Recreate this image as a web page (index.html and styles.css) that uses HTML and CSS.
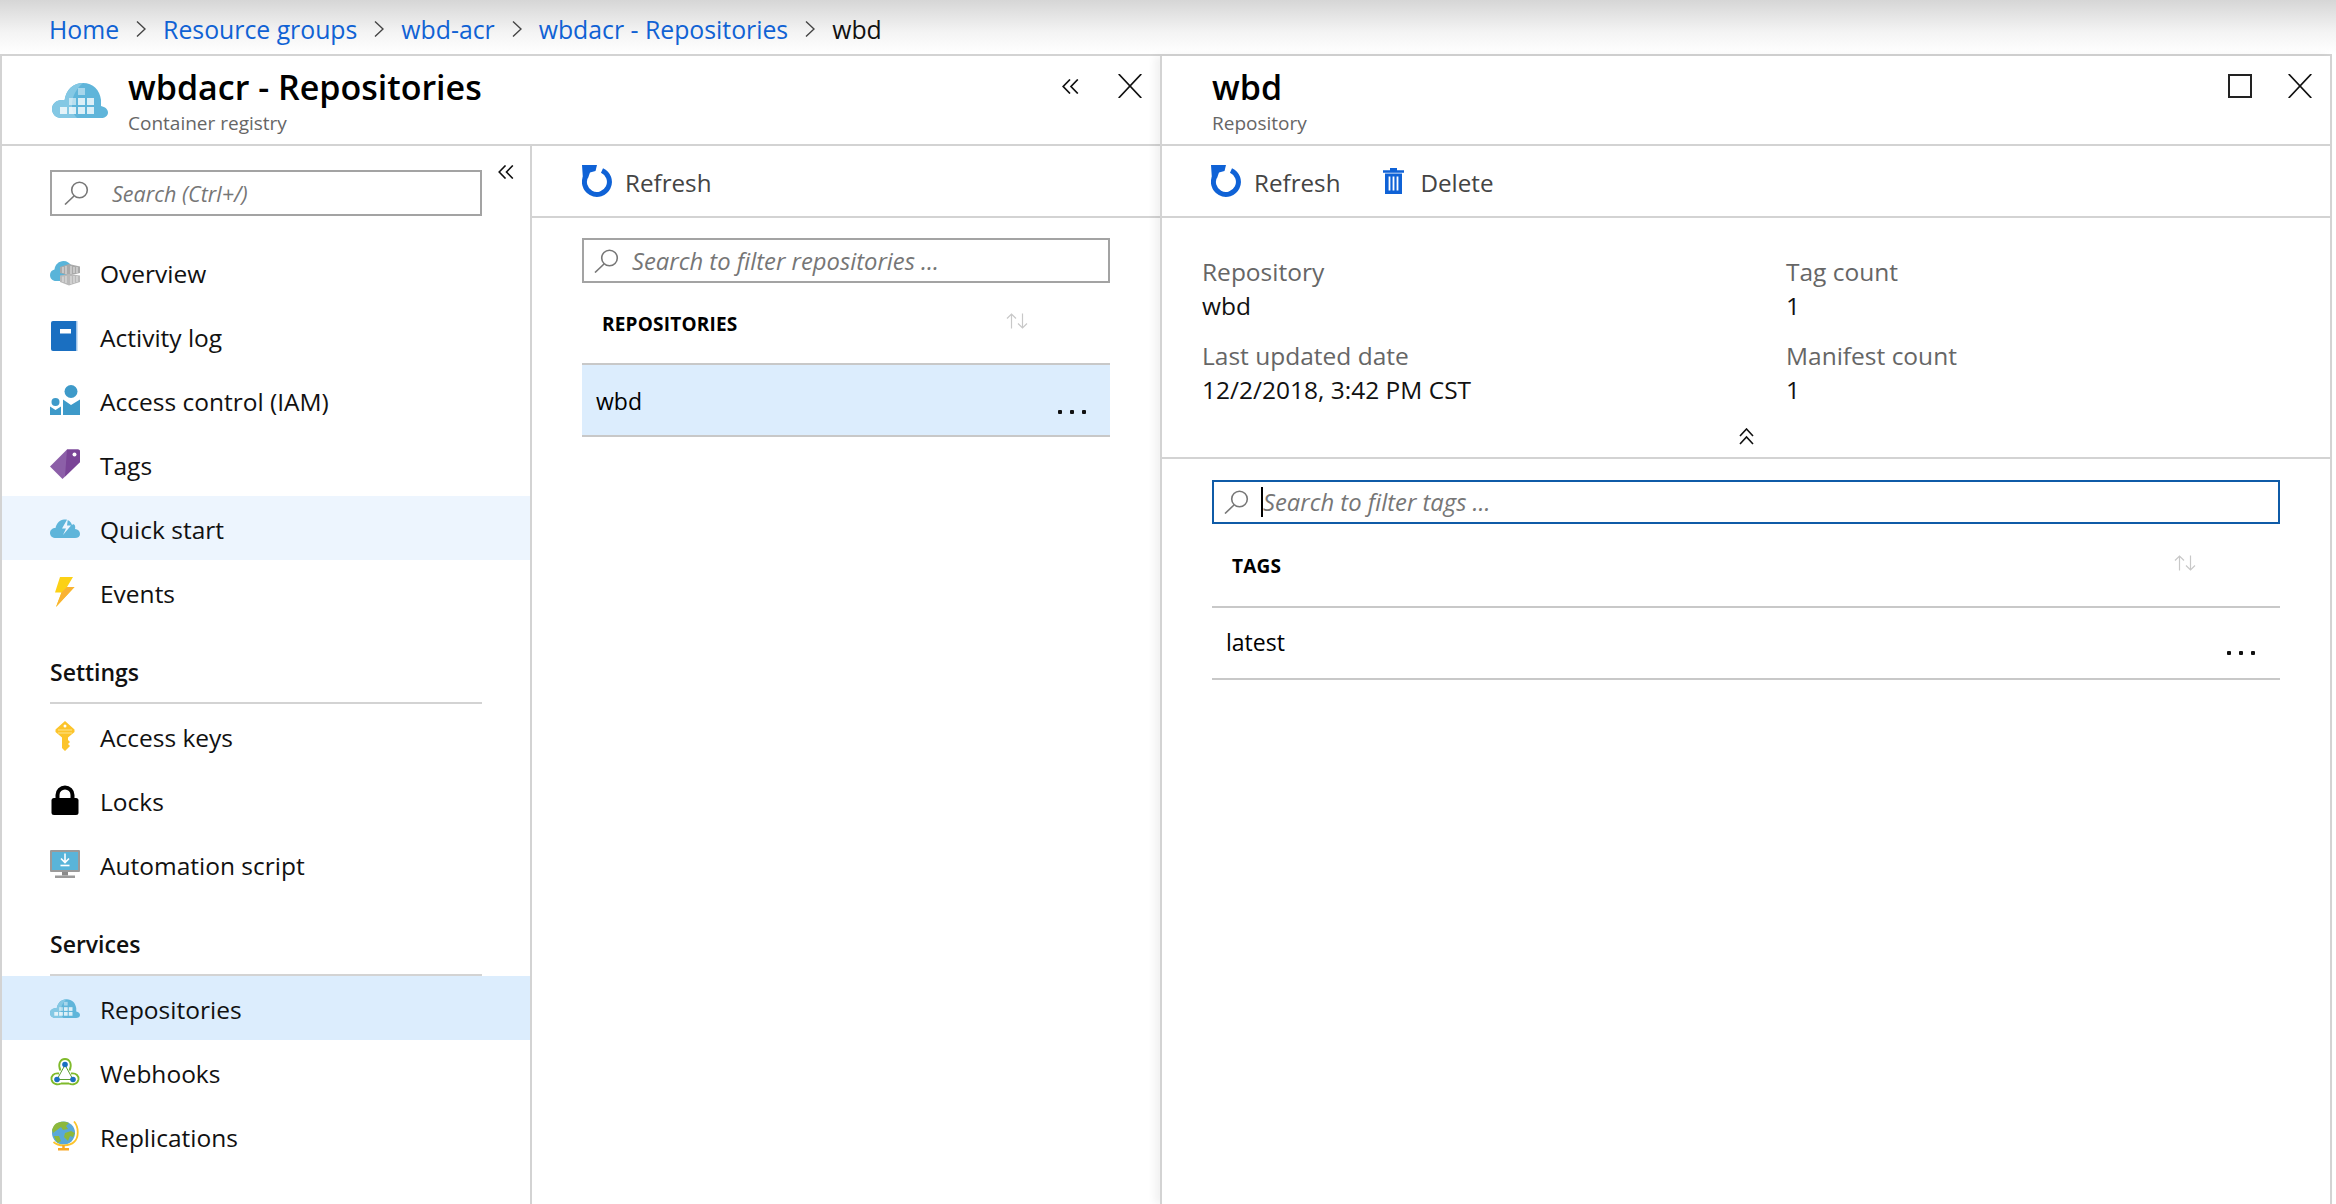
FILE: index.html
```html
<!DOCTYPE html>
<html lang="en">
<head>
    <meta charset="UTF-8">
    <meta name="viewport" content="width=device-width, initial-scale=1.0">
    <title>wbd - Repository</title>
    <link rel="stylesheet" href="styles.css">
</head>
<body>

    <!-- Shared icons -->
    <svg class="defs" width="0" height="0">
        <symbol id="i-search" viewBox="0 0 25 24">
            <circle cx="15.5" cy="9" r="7.8" fill="none" stroke="#777" stroke-width="1.6"/>
            <path d="M10 15 1 23.5" fill="none" stroke="#777" stroke-width="1.6"/>
        </symbol>
        <symbol id="i-close" viewBox="0 0 24 24">
            <path d="M.7 0 23.3 24M23.3 0 .7 24" fill="none" stroke="#111" stroke-width="1.7"/>
        </symbol>
        <symbol id="i-collapse" viewBox="0 0 17 15">
            <path d="M8 .5 1.2 7.5 8 14.5M15.8 .5 9 7.5 15.8 14.5" fill="none" stroke="#111" stroke-width="1.7"/>
        </symbol>
        <symbol id="i-refresh" viewBox="0 0 30 32">
            <path d="M20 5.500A12.500 12.500 0 1 1 4.200 10.500" fill="none" stroke="#0f62d6" stroke-width="5"/>
            <path d="M0 0H15L13.500 6 8 7.500 6 13 1 15Z" fill="#0f62d6"/>
        </symbol>
        <symbol id="i-sort" viewBox="0 0 22 16">
            <path d="M5.500 15.500V1M1 5.500 5.500 1 10 5.500M16.500 .5V15M12 10.500 16.500 15 21 10.500" fill="none" stroke="#c8c8c8" stroke-width="1.200"/>
        </symbol>
        <symbol id="i-registry" viewBox="0 0 56 35">
            <path d="M9 35C4 35 0 31 0 26 0 21 4 17 10 17L12.500 17.400C14 7 21 0 31 0 41 0 48 7 49 17V23C53 24 56 26 56 29.500 56 33 53 35 49 35Z" fill="#5fb5da"/>
            <path d="M9 35C4 35 0 31 0 26 0 21 4 17 10 17L12.500 17.400C14 7 21 0 31 0 24 6 20 14 20 22 20 28 22 32 25 35Z" fill="#84c8e4"/>
            <g fill="#fff" fill-opacity=".78">
                <rect x="8" y="24" width="7" height="7"/>
                <rect x="17" y="24" width="7" height="7"/>
                <rect x="26" y="24" width="7" height="7"/>
                <rect x="35" y="24" width="7" height="7"/>
                <rect x="17" y="15" width="7" height="7" fill-opacity=".55"/>
                <rect x="26" y="15" width="7" height="7"/>
                <rect x="35" y="15" width="7" height="7"/>
                <rect x="26" y="5" width="7" height="7" fill-opacity=".45"/>
            </g>
        </symbol>
    </svg>

    <!-- Breadcrumb -->
    <nav class="breadcrumb">
        <a>Home</a>
        <svg class="crumb-sep" viewBox="0 0 10 16"><path d="M1 .5 9 8 1 15.500" fill="none" stroke="#444" stroke-width="1.400"/></svg>
        <a>Resource groups</a>
        <svg class="crumb-sep" viewBox="0 0 10 16"><path d="M1 .5 9 8 1 15.500" fill="none" stroke="#444" stroke-width="1.400"/></svg>
        <a>wbd-acr</a>
        <svg class="crumb-sep" viewBox="0 0 10 16"><path d="M1 .5 9 8 1 15.500" fill="none" stroke="#444" stroke-width="1.400"/></svg>
        <a>wbdacr - Repositories</a>
        <svg class="crumb-sep" viewBox="0 0 10 16"><path d="M1 .5 9 8 1 15.500" fill="none" stroke="#444" stroke-width="1.400"/></svg>
        <span>wbd</span>
    </nav>

    <div class="blades">

        <!-- Registry blade -->
        <section class="blade blade-main">
            <header class="blade-header">
                <svg class="registry-logo"><use href="#i-registry"/></svg>
                <div class="blade-titles">
                    <h1>wbdacr - Repositories</h1>
                    <p>Container registry</p>
                </div>
                <div class="blade-actions">
                    <svg class="icon-collapse"><use href="#i-collapse"/></svg>
                    <svg class="icon-close"><use href="#i-close"/></svg>
                </div>
            </header>

            <div class="blade-body">
                <aside class="side-menu">
                    <div class="side-search-row">
                        <div class="search-box side-search">
                            <svg class="icon-search"><use href="#i-search"/></svg>
                            <span>Search (Ctrl+/)</span>
                        </div>
                        <svg class="side-collapse"><use href="#i-collapse"/></svg>
                    </div>

                    <a class="menu-item">
                        <svg class="menu-icon" viewBox="0 0 30 30">
                            <path d="M6 24C2.500 24 0 21.500 0 18 0 15 2 13 4.500 12.500 5 7.500 9 4 13.500 4 17 4 20 6 21.500 9H18V24Z" fill="#59b4d9"/>
                            <path d="M10 10 19 7 30 9.500V16L19 18.500 10 16Z" fill="#a9a9a9"/>
                            <path d="M10 18.500 19 17 30 18.500V25L19 28.500 10 25Z" fill="#b9b9b9"/>
                            <path d="M13 10V16M16 9V17M21 9V17M24 10V16M27 10V16M13 19.500V25M16 19V26M21 19V27M24 19V26M27 19V25" stroke="#e6e6e6" stroke-width="1"/>
                        </svg>
                        <span>Overview</span>
                    </a>
                    <a class="menu-item">
                        <svg class="menu-icon" viewBox="0 0 30 30">
                            <path d="M3 0H27.500V30H3Z" fill="#a0c4e8"/>
                            <path d="M1 2Q1 0 3 0H26V30H3Q1 30 1 28Z" fill="#1a6fc1"/>
                            <rect x="10" y="8" width="11" height="4.500" fill="#fff"/>
                        </svg>
                        <span>Activity log</span>
                    </a>
                    <a class="menu-item">
                        <svg class="menu-icon" viewBox="0 0 30 30">
                            <circle cx="21" cy="6.500" r="6.500" fill="#3e9ac9"/>
                            <path d="M13 14.500 21 20 30 14.500V30H13Z" fill="#3e9ac9"/>
                            <circle cx="5.500" cy="17" r="4" fill="#3e9ac9"/>
                            <path d="M0 21.500 5.500 25 11 21.500V30H0Z" fill="#3e9ac9"/>
                        </svg>
                        <span>Access control (IAM)</span>
                    </a>
                    <a class="menu-item">
                        <svg class="menu-icon" viewBox="0 0 30 30">
                            <path d="M0 17.500 17 .5H28Q30 .5 30 2.500V13L12.500 30Z" fill="#8c5fa8"/>
                            <path d="M15 27.500 30 13V2.500Q30 .5 28 .5H17Z" fill="#7a4497"/>
                            <circle cx="24.500" cy="5.500" r="2" fill="#fff"/>
                        </svg>
                        <span>Tags</span>
                    </a>
                    <a class="menu-item menu-item-hover">
                        <svg class="menu-icon" viewBox="0 0 30 30">
                            <path d="M6 25C2.500 25 0 23 0 20 0 17 2.500 15 5.500 15 6.500 10 10 7 14 6.500 18 6 21 8.500 22 12 24 10 26 13 25 16 28 16.500 30 18 30 21 30 23.500 28 25 25 25Z" fill="#5fb5da"/>
                            <path d="M18 5 12 15.500H16L13 22 21 12.500H17Z" fill="#edf5fe"/>
                        </svg>
                        <span>Quick start</span>
                    </a>
                    <a class="menu-item">
                        <svg class="menu-icon" viewBox="0 0 30 30">
                            <path d="M10 0H23L17 10H24.500L6 30 11.500 15.500H5Z" fill="#fcd116"/>
                            <path d="M17 10H24.500L6 30 11.500 15.500Z" fill="#f9b233"/>
                        </svg>
                        <span>Events</span>
                    </a>

                    <h2 class="menu-heading">Settings</h2>

                    <a class="menu-item">
                        <svg class="menu-icon" viewBox="0 0 30 30">
                            <path d="M15 0 24.500 8.500V11L18 16.500V19L20 21 18 23 20 25 15 30 12 27V16.500L5.500 11V8.500Z" fill="#fcc42a"/>
                            <circle cx="15" cy="5" r="1.500" fill="#fff"/>
                            <path d="M8 9H22M8 12H22" stroke="#fde38a" stroke-width="1.200"/>
                        </svg>
                        <span>Access keys</span>
                    </a>
                    <a class="menu-item">
                        <svg class="menu-icon" viewBox="0 0 30 30">
                            <path d="M7.500 14V10A7.500 7.500 0 0 1 22.500 10V14" fill="none" stroke="#000" stroke-width="4"/>
                            <rect x="1.500" y="13" width="27" height="17" rx="2.500" fill="#000"/>
                        </svg>
                        <span>Locks</span>
                    </a>
                    <a class="menu-item">
                        <svg class="menu-icon" viewBox="0 0 30 30">
                            <rect x="0" y="1" width="30" height="22" rx="1" fill="#9a9a9a"/>
                            <rect x="2" y="3" width="26" height="18" fill="#59b4d9"/>
                            <path d="M15 4.500V13M11 9.500 15 13.500 19 9.500" fill="none" stroke="#fff" stroke-width="1.600"/>
                            <path d="M10.500 16.500H19.500" stroke="#fff" stroke-width="1.600"/>
                            <rect x="12" y="23" width="6" height="3.500" fill="#8a8a8a"/>
                            <rect x="5" y="26.500" width="20" height="2.500" fill="#9a9a9a"/>
                        </svg>
                        <span>Automation script</span>
                    </a>

                    <h2 class="menu-heading">Services</h2>

                    <a class="menu-item menu-item-active">
                        <svg class="menu-icon-small"><use href="#i-registry"/></svg>
                        <span>Repositories</span>
                    </a>
                    <a class="menu-item">
                        <svg class="menu-icon" viewBox="0 0 30 30">
                            <path d="M15 8 7 22.500H23Z" fill="none" stroke="#5a9e2f" stroke-width="1"/>
                            <path d="M10.500 13.500C7.500 8 10 2 15 2 20 2 22.500 8 19.500 13.500M9 16.500C3.500 15.500 1 19.500 1.500 22.500 2.500 27 7.500 28.500 11 26.500M19 26.500C22.500 28.500 27.500 27 28.500 22.500 29 19.500 26.500 15.500 21 16.500M11 26.500H19" fill="none" stroke="#7fba2b" stroke-width="1.800"/>
                            <circle cx="15" cy="7.500" r="2.800" fill="#1a6fc1"/>
                            <circle cx="7" cy="22.500" r="2.800" fill="#1a6fc1"/>
                            <circle cx="23" cy="22.500" r="2.800" fill="#1a6fc1"/>
                        </svg>
                        <span>Webhooks</span>
                    </a>
                    <a class="menu-item">
                        <svg class="menu-icon" viewBox="0 0 30 30">
                            <circle cx="13.500" cy="12" r="11.500" fill="#59a8d9"/>
                            <path d="M6 2.500C10 .5 15 0 19 2L16 5 18 8 13 9 11 6 7 9 3 12 2 9C3 6 4 4 6 2.500ZM15 12 21 10 25 12 23 16 20 15 18 20 14 16ZM4 15 9 15 11 20 8 22C6 20 5 18 4 15Z" fill="#8cb83c"/>
                            <path d="M24 .5C29 6 29 17 24 21 20 25 9 26 3.500 21" fill="none" stroke="#fcc42a" stroke-width="1.800"/>
                            <path d="M13.500 24V27" stroke="#f9a825" stroke-width="2.500"/>
                            <rect x="8" y="27" width="11" height="2.500" fill="#f9a825"/>
                        </svg>
                        <span>Replications</span>
                    </a>
                </aside>

                <div class="repo-pane">
                    <div class="toolbar repo-toolbar">
                        <a class="tool-btn">
                            <svg class="icon-refresh"><use href="#i-refresh"/></svg>
                            <span>Refresh</span>
                        </a>
                    </div>
                    <div class="repo-list">
                        <div class="search-box repo-search">
                            <svg class="icon-search"><use href="#i-search"/></svg>
                            <span>Search to filter repositories ...</span>
                        </div>
                        <div class="list-head repo-head">
                            <span>REPOSITORIES</span>
                            <svg class="icon-sort"><use href="#i-sort"/></svg>
                        </div>
                        <div class="list-row repo-row">
                            <span>wbd</span>
                            <i class="more-dots"></i>
                        </div>
                    </div>
                </div>
            </div>
        </section>

        <!-- Repository blade -->
        <section class="blade blade-detail">
            <header class="blade-header detail-header">
                <div class="blade-titles">
                    <h1>wbd</h1>
                    <p>Repository</p>
                </div>
                <div class="blade-actions detail-actions">
                    <i class="icon-maximize"></i>
                    <svg class="icon-close"><use href="#i-close"/></svg>
                </div>
            </header>

            <div class="toolbar detail-toolbar">
                <a class="tool-btn">
                    <svg class="icon-refresh"><use href="#i-refresh"/></svg>
                    <span>Refresh</span>
                </a>
                <a class="tool-btn">
                    <svg class="icon-trash" viewBox="0 0 21 26">
                        <path d="M0 3.500H21M7 1H14" stroke="#0f62d6" stroke-width="2.500" fill="none"/>
                        <path d="M2 5.500H19V26H2Z" fill="#0f62d6"/>
                        <path d="M6.500 8.500V22.500M10.500 8.500V22.500M14.500 8.500V22.500" stroke="#fff" stroke-width="1.800"/>
                    </svg>
                    <span>Delete</span>
                </a>
            </div>

            <div class="essentials">
                <div class="info-grid">
                    <div class="info-item">
                        <div class="info-label">Repository</div>
                        <div class="info-value">wbd</div>
                    </div>
                    <div class="info-item">
                        <div class="info-label">Tag count</div>
                        <div class="info-value">1</div>
                    </div>
                    <div class="info-item">
                        <div class="info-label">Last updated date</div>
                        <div class="info-value">12/2/2018, 3:42 PM CST</div>
                    </div>
                    <div class="info-item">
                        <div class="info-label">Manifest count</div>
                        <div class="info-value">1</div>
                    </div>
                </div>
                <svg class="icon-fold" viewBox="0 0 15 17">
                    <path d="M1 8 7.500 1 14 8M1 16 7.500 9 14 16" fill="none" stroke="#111" stroke-width="1.600"/>
                </svg>
            </div>

            <div class="tag-list">
                <div class="search-box tag-search">
                    <svg class="icon-search"><use href="#i-search"/></svg>
                    <i class="text-caret"></i>
                    <span>Search to filter tags ...</span>
                </div>
                <div class="list-head tag-head">
                    <span>TAGS</span>
                    <svg class="icon-sort"><use href="#i-sort"/></svg>
                </div>
                <div class="list-row tag-row">
                    <span>latest</span>
                    <i class="more-dots"></i>
                </div>
            </div>
        </section>

    </div>

</body>
</html>
```

FILE: styles.css
```css
* {
    box-sizing: border-box;
}

html, body {
    margin: 0;
    height: 1204px;
    overflow: hidden;
}

body {
    font-family: "Open Sans", "Noto Sans", sans-serif;
    font-size: 24.5px;
    color: #111;
    background-color: #fff;
}

.defs {
    position: absolute;
}

/* Breadcrumb */
.breadcrumb {
    height: 54px;
    padding: 3px 0 0 49px;
    display: flex;
    align-items: center;
    gap: 17px;
    font-size: 24.8px;
    background: linear-gradient(#d6d6d6, #f4f4f4 60%, #fff);
}

.breadcrumb a {
    color: #1062d4;
}

.crumb-sep {
    width: 10px;
    height: 16px;
}

/* Blades */
.blades {
    display: flex;
    width: 2332px;
    height: 1150px;
    border-top: 2px solid #d3d3d3;
}

.blade {
    display: flex;
    flex-direction: column;
}

.blade-main {
    width: 1160px;
    border-left: 2px solid #d3d3d3;
}

.blade-detail {
    width: 1172px;
    border-left: 2px solid #d3d3d3;
    border-right: 2px solid #d3d3d3;
    box-shadow: -5px 0 8px rgba(0, 0, 0, 0.06);
    position: relative;
}

.blade-header {
    height: 90px;
    flex: none;
    display: flex;
    align-items: flex-start;
    border-bottom: 2px solid #d3d3d3;
}

.registry-logo {
    width: 56px;
    height: 35px;
    margin: 27px 20px 0 50px;
}

.detail-header {
    padding-left: 50px;
}

.blade-titles h1 {
    margin: 11px 0 0;
    font-size: 34px;
    line-height: 40px;
    font-weight: 600;
    color: #000;
}

.blade-titles p {
    margin: 4px 0 0;
    font-size: 19px;
    line-height: 24px;
    color: #666;
}

.blade-actions {
    margin-left: auto;
    padding: 18px 18px 0 0;
    display: flex;
    align-items: center;
    gap: 39px;
}

.detail-actions {
    gap: 36px;
}

.icon-collapse {
    width: 17px;
    height: 15px;
}

.icon-close {
    width: 24px;
    height: 24px;
}

.icon-maximize {
    display: block;
    width: 24px;
    height: 24px;
    border: 2px solid #222;
}

.blade-body {
    flex: 1;
    display: flex;
}

/* Side menu */
.side-menu {
    width: 530px;
    flex: none;
    border-right: 2px solid #d3d3d3;
}

.side-search-row {
    height: 94px;
    padding: 24px 0 0 48px;
    display: flex;
    align-items: flex-start;
}

.side-collapse {
    width: 16px;
    height: 14px;
    margin-left: 16px;
    margin-top: -5px;
}

.menu-item {
    height: 64px;
    padding-left: 48px;
    display: flex;
    align-items: center;
    gap: 20px;
    color: #111;
}

.menu-item span {
    position: relative;
    top: 1px;
}

.menu-icon {
    width: 30px;
    height: 30px;
    flex: none;
}

.menu-icon-small {
    width: 30px;
    height: 19px;
    flex: none;
}

.menu-item-hover {
    background-color: #edf5fe;
}

.menu-item-active {
    background-color: #dcedfd;
}

.menu-heading {
    height: 80px;
    width: 432px;
    margin: 0 0 0 48px;
    padding-bottom: 14px;
    display: flex;
    align-items: flex-end;
    font-size: 23px;
    font-weight: 600;
    border-bottom: 2px solid #d3d3d3;
}

/* Search boxes */
.search-box {
    display: flex;
    align-items: center;
    border: 2px solid #a3a3a3;
    font-size: 23.8px;
    font-style: italic;
    color: #767676;
    background-color: #fff;
}

.icon-search {
    width: 25px;
    height: 24px;
    flex: none;
}

.side-search {
    width: 432px;
    height: 46px;
    padding-left: 12px;
    gap: 23px;
    font-size: 21.5px;
}

.repo-search {
    height: 45px;
    padding-left: 10px;
    gap: 13px;
}

.tag-search {
    height: 44px;
    padding-left: 10px;
    border-color: #0f5ba7;
}

.text-caret {
    width: 2px;
    height: 30px;
    margin-left: 12px;
    background-color: #000;
}

/* Toolbars */
.toolbar {
    height: 72px;
    flex: none;
    padding-left: 49px;
    display: flex;
    align-items: center;
    gap: 43px;
    border-bottom: 2px solid #d3d3d3;
}

.repo-toolbar {
    padding-left: 50px;
}

.tool-btn {
    display: flex;
    align-items: center;
    gap: 13px;
    font-size: 24.2px;
    color: #444;
}

.tool-btn span {
    position: relative;
    top: 1px;
}

.icon-refresh {
    width: 30px;
    height: 32px;
}

.icon-trash {
    width: 21px;
    height: 26px;
    margin-right: 3px;
}

/* Repository list */
.repo-pane {
    flex: 1;
}

.repo-list {
    padding: 20px 50px 0 50px;
}

.list-head {
    display: flex;
    align-items: center;
    justify-content: space-between;
    font-size: 19px;
    letter-spacing: 0.2px;
    font-weight: 700;
    color: #000;
}

.list-head span {
    position: relative;
    top: 1px;
}

.repo-head {
    height: 82px;
    padding: 0 82px 0 20px;
    border-bottom: 2px solid #c8c8c8;
}

.list-row {
    height: 72px;
    display: flex;
    justify-content: space-between;
    font-size: 23px;
    font-weight: 500;
    color: #000;
    border-bottom: 2px solid #c8c8c8;
}

.repo-row {
    padding: 20px 24px 0 14px;
    background-color: #dcedfd;
}

.icon-sort {
    width: 22px;
    height: 16px;
    margin-top: -4px;
}

.more-dots {
    display: block;
    width: 28px;
    height: 4px;
    margin-top: 25px;
    background: radial-gradient(circle at 2px 2px, #111 2px, transparent 2.500px) 0 0 / 12px 4px repeat-x;
}

/* Repository details */
.essentials {
    height: 241px;
    flex: none;
    padding: 37px 0 0 40px;
    display: flex;
    flex-direction: column;
    border-bottom: 2px solid #d3d3d3;
}

.info-grid {
    display: grid;
    grid-template-columns: 584px 1fr;
    row-gap: 16px;
}

.info-label,
.info-value {
    line-height: 34px;
}

.info-label {
    color: #666;
}

.icon-fold {
    width: 15px;
    height: 17px;
    margin: 21px 0 0 537px;
}

.tag-list {
    padding: 21px 50px 0 50px;
}

.tag-head {
    height: 84px;
    padding: 0 84px 0 20px;
    border-bottom: 2px solid #c8c8c8;
}

.tag-row {
    padding: 18px 25px 0 14px;
}
```
